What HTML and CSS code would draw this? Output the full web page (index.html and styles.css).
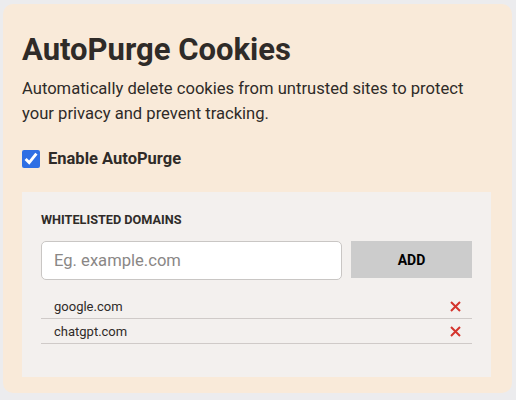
FILE: index.html
```html
<!DOCTYPE html>
<html lang="en">
<head>
  <meta charset="UTF-8" />
  <title>AutoPurge Cookies</title>
  <link rel="stylesheet" href="styles.css">
</head>
<body>
  <div class="popup">
    <h1>AutoPurge Cookies</h1>
    <p class="intro">Automatically delete cookies from untrusted sites to protect your privacy and prevent tracking.</p>
    <label class="toggle">
      <input type="checkbox" id="enabled" checked>
      <span>Enable AutoPurge</span>
    </label>
    <div class="whitelist">
      <h2>WHITELISTED DOMAINS</h2>
      <div class="add-row">
        <input type="text" id="domainInput" placeholder="Eg. example.com">
        <button id="addBtn">ADD</button>
      </div>
      <ul id="domainList">
        <li>
          <span>google.com</span>
          <button class="remove"><svg width="11" height="11" viewBox="0 0 11 11"><path d="M1 1L10 10M10 1L1 10"/></svg></button>
        </li>
        <li>
          <span>chatgpt.com</span>
          <button class="remove"><svg width="11" height="11" viewBox="0 0 11 11"><path d="M1 1L10 10M10 1L1 10"/></svg></button>
        </li>
      </ul>
    </div>
  </div>
</body>
</html>
```

FILE: styles.css
```css
body {
  margin: 0;
  background: #ececee;
  font-family: Roboto, "Noto Sans", sans-serif;
  color: #2f2b28;
}
.popup {
  margin: 4px 4px 0 3px;
  padding: 22px 21px 16px 19px;
  background: #f9ead9;
  border-radius: 10px;
}
h1 {
  margin: 7px 0 0;
  font-size: 31px;
  font-weight: 700;
  line-height: 34px;
}
.intro {
  margin: 9px 0 0;
  font-size: 16.6px;
  line-height: 25px;
}
.toggle {
  display: flex;
  align-items: center;
  gap: 8px;
  margin-top: 23px;
  font-size: 16.5px;
  font-weight: 700;
}
.toggle input {
  width: 18px;
  height: 18px;
  margin: 0;
  accent-color: #2f6fe4;
}
.whitelist {
  margin-top: 24px;
  padding: 20px 19px 33px;
  background: #f3f0ee;
}
.whitelist h2 {
  margin: 0 0 13px;
  font-size: 12.7px;
  font-weight: 700;
  line-height: 16px;
}
.add-row {
  display: flex;
  gap: 9px;
}
.add-row input {
  flex: 1;
  height: 39px;
  box-sizing: border-box;
  padding: 0 12px;
  border: 1px solid #c9c6c4;
  border-radius: 5px;
  background: #fff;
  font-family: inherit;
  font-size: 16.6px;
  color: #2f2b28;
}
.add-row input::placeholder {
  color: #8a8786;
}
.add-row button {
  width: 121px;
  height: 37px;
  border: none;
  background: #cccccc;
  font-family: inherit;
  font-size: 14px;
  font-weight: 700;
  color: #000;
}
#domainList {
  list-style: none;
  margin: 14px 0 0;
  padding: 0;
}
#domainList li {
  display: flex;
  justify-content: space-between;
  align-items: center;
  height: 24px;
  padding: 0 11px 0 13px;
  border-bottom: 1px solid #cfcac8;
  font-size: 13px;
}
.remove {
  display: flex;
  border: none;
  background: none;
  padding: 0;
}
.remove svg {
  stroke: #d4342c;
  stroke-width: 2;
}
```
